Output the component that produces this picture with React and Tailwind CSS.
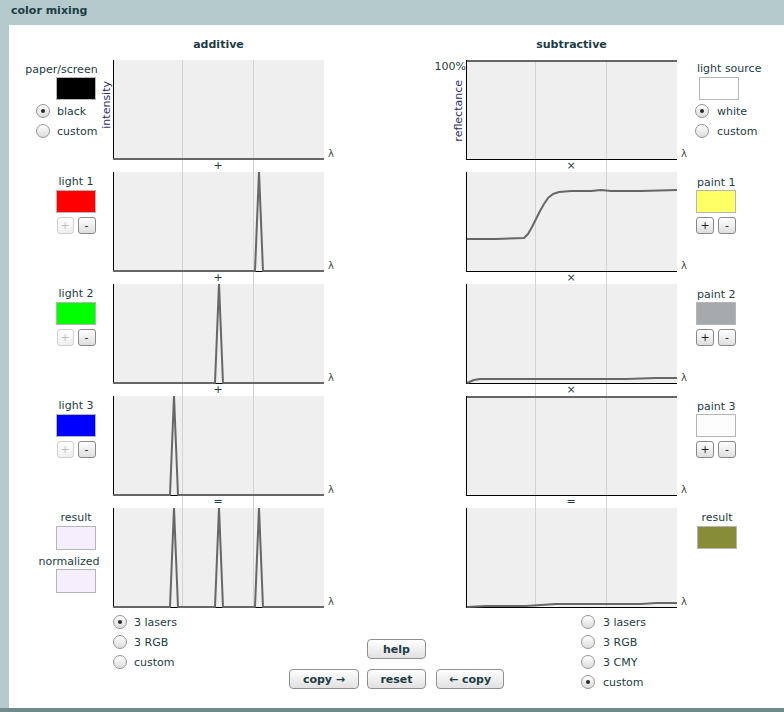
import React from "react";

const W = 211;
const H = 100;

function peaksLine(peaks) {
  const pts = ["0,99"];
  peaks.forEach((p) => {
    pts.push(`${p - 4},99`, `${p},0`, `${p + 4},99`);
  });
  pts.push(`${W},99`);
  return pts.join(" ");
}

const additive = [
  { line: peaksLine([]) },
  { line: peaksLine([146]) },
  { line: peaksLine([106]) },
  { line: peaksLine([61]) },
  { line: peaksLine([61, 106, 146]) },
];

const subtractive = [
  { line: "1,1 211,1" },
  {
    line: "1,67 30,67 58,66 62,62 66,55 70,47 74,39 78,32 82,26 87,22 93,20 105,19 125,19 135,18 145,19 175,19 211,18",
  },
  { line: "1,99 8,96 14,95 60,95 120,95 160,95 190,94 211,94" },
  { line: "1,1 211,1" },
  { line: "1,99 20,98 60,98 75,97 90,96 150,96 175,96 190,95 211,95" },
];

function Chart({ line }) {
  return (
    <svg width={W} height={H} viewBox={`0 0 ${W} ${H}`} className="block shrink-0">
      <rect x="1" y="0" width={W - 1} height={H} fill="#efefef" />
      <line x1="69.5" y1="0" x2="69.5" y2={H} stroke="#d3d3d3" />
      <line x1="140.5" y1="0" x2="140.5" y2={H} stroke="#d3d3d3" />
      <line x1="0" y1="99.5" x2={W} y2="99.5" stroke="#000" />
      <line x1="0.5" y1="0" x2="0.5" y2={H} stroke="#000" />
      <polyline points={line} fill="none" stroke="#676767" strokeWidth="2" strokeLinejoin="round" />
    </svg>
  );
}

function Gap({ op }) {
  return (
    <div className="flex h-3 w-[211px]">
      <div className="w-[69px]" />
      <div className="w-px bg-[#d3d3d3]" />
      <div className="w-[70px] text-center text-[11px] leading-[12px]">{op}</div>
      <div className="w-px bg-[#d3d3d3]" />
    </div>
  );
}

function ChartColumn({ charts, ops, title, width }) {
  return (
    <div className={width}>
      <div className="h-[35px] w-[211px] pt-[13px] text-center font-bold leading-[13px]">{title}</div>
      {charts.map((c, i) => (
        <div key={i}>
          <div className="flex h-[100px] items-end">
            <Chart line={c.line} />
            <span className="mb-[1px] ml-[4px] text-[10px] leading-none text-[#444]">λ</span>
          </div>
          {i < 4 && <Gap op={ops[i]} />}
        </div>
      ))}
    </div>
  );
}

function Radio({ checked, label, gap = "gap-[7px]" }) {
  return (
    <div className={`flex h-5 items-center ${gap}`}>
      <span className="flex h-[14px] w-[14px] items-center justify-center rounded-full border border-[#959595] bg-linear-to-b from-white to-[#dcdcdc]">
        {checked && <span className="h-[4px] w-[4px] rounded-full bg-[#2a2a2a]" />}
      </span>
      <span className="leading-[13px]">{label}</span>
    </div>
  );
}

function SmallBtn({ children, disabled }) {
  return (
    <button
      className={
        disabled
          ? "flex h-[17px] w-[17px] items-center justify-center rounded-[3px] border border-[#d0d0d0] bg-linear-to-b from-white to-[#efefef] text-[11px] leading-none text-[#c2c2c2]"
          : "flex h-[17px] w-[18px] items-center justify-center rounded-[3px] border border-[#8a8a8a] bg-linear-to-b from-white to-[#dedede] text-[11px] leading-none text-[#222]"
      }
    >
      {children}
    </button>
  );
}

function Btn({ children, className }) {
  return (
    <button
      className={`h-[20px] rounded-[4px] border border-[#8f8f8f] bg-linear-to-b from-white to-[#e1e1e1] text-[11px] font-bold leading-none text-[#1d3c44] ${className}`}
    >
      {children}
    </button>
  );
}

function Swatch({ color, className = "" }) {
  return <div className={`h-[23px] w-[40px] border border-[#b5b5b5] ${className}`} style={{ background: color }} />;
}

function LightRow({ label, color }) {
  return (
    <div className="h-[112px] pt-[3px]">
      <div className="ml-[47px] flex w-[40px] flex-col items-center">
        <div className="whitespace-nowrap leading-[13px]">{label}</div>
        <Swatch color={color} className="mt-[2px]" />
        <div className="mt-[4px] flex gap-[4px]">
          <SmallBtn disabled>+</SmallBtn>
          <SmallBtn>-</SmallBtn>
        </div>
      </div>
    </div>
  );
}

function PaintRow({ label, color }) {
  return (
    <div className="h-[112px] pt-[4px]">
      <div className="ml-[2px] leading-[13px]">{label}</div>
      <Swatch color={color} className="ml-[1px] mt-[1px]" />
      <div className="ml-[1px] mt-[4px] flex gap-[4px]">
        <SmallBtn>+</SmallBtn>
        <SmallBtn>-</SmallBtn>
      </div>
    </div>
  );
}

export default function App() {
  return (
    <div className="h-[712px] w-[784px] bg-[#b5cacd] font-['DejaVu_Sans',sans-serif] text-[11px] text-[#1d3c44]">
      <div className="h-[25px] pl-[11px] pt-[4px] font-bold leading-[13px]">color mixing</div>
      <div className="ml-[9px] h-[683px] bg-white">
        <div className="flex h-[583px]">
          {/* additive controls */}
          <div className="w-[90px] pt-[35px]">
            <div className="h-[112px] pt-[3px]">
              <div className="ml-[47px] flex w-[40px] flex-col items-center">
                <div className="mr-[29px] whitespace-nowrap leading-[13px]">paper/screen</div>
                <Swatch color="#000" className="mt-px" />
              </div>
              <div className="ml-[27px] mt-px">
                <Radio checked label="black" />
                <Radio label="custom" />
              </div>
            </div>
            <LightRow label="light 1" color="#ff0000" />
            <LightRow label="light 2" color="#00ff00" />
            <LightRow label="light 3" color="#0000ff" />
            <div className="pt-[3px]">
              <div className="ml-[47px] flex w-[40px] flex-col items-center">
                <div className="whitespace-nowrap leading-[13px]">result</div>
                <Swatch color="#f5effd" className="mt-[2px] h-[24px]" />
                <div className="mr-[14px] mt-[5px] whitespace-nowrap leading-[13px]">normalized</div>
                <Swatch color="#f5effd" className="mt-px h-[24px]" />
              </div>
            </div>
          </div>
          <div className="flex w-[14px] flex-col items-end pt-[56px]">
            <span className="rotate-180 leading-[12px] text-[#2c2c6c] [writing-mode:vertical-rl]">intensity</span>
          </div>
          <ChartColumn charts={additive} ops={["+", "+", "+", "="]} title="additive" width="w-[231px]" />
          <div className="w-[90px]" />

          {/* subtractive */}
          <div className="flex w-[32px] flex-col items-end pt-[35px]">
            <div className="leading-[13px]">100%</div>
            <span className="mt-[7px] mr-px rotate-180 leading-[12px] text-[#2c2c6c] [writing-mode:vertical-rl]">reflectance</span>
          </div>
          <ChartColumn charts={subtractive} ops={["×", "×", "×", "="]} title="subtractive" width="w-[229px]" />

          {/* subtractive controls */}
          <div className="flex-1 pt-[35px]">
            <div className="h-[112px] pt-[2px]">
              <div className="ml-[2px] leading-[13px]">light source</div>
              <Swatch color="#fff" className="ml-[4px] mt-[2px]" />
              <div className="mt-px">
                <Radio checked label="white" gap="gap-[8px]" />
                <Radio label="custom" gap="gap-[8px]" />
              </div>
            </div>
            <PaintRow label="paint 1" color="#ffff66" />
            <PaintRow label="paint 2" color="#a3a9ad" />
            <PaintRow label="paint 3" color="#fdfdfd" />
            <div className="pt-[3px]">
              <div className="ml-[2px] flex w-[40px] flex-col items-center">
                <div className="whitespace-nowrap leading-[13px]">result</div>
                <Swatch color="#878c38" className="mt-[2px]" />
              </div>
            </div>
          </div>
        </div>

        {/* bottom controls */}
        <div className="flex">
          <div className="ml-[104px] w-[100px] pt-[4px]">
            <Radio checked label="3 lasers" />
            <Radio label="3 RGB" />
            <Radio label="custom" />
          </div>
          <div className="ml-[76px] flex w-[215px] flex-col items-center pt-[31px]">
            <Btn className="w-[59px]">help</Btn>
            <div className="mt-[10px] flex">
              <Btn className="w-[70px]">copy →</Btn>
              <Btn className="ml-[8px] w-[59px]">reset</Btn>
              <Btn className="ml-[10px] w-[68px]">← copy</Btn>
            </div>
          </div>
          <div className="ml-[77px] pt-[4px]">
            <Radio label="3 lasers" gap="gap-[8px]" />
            <Radio label="3 RGB" gap="gap-[8px]" />
            <Radio label="3 CMY" gap="gap-[8px]" />
            <Radio checked label="custom" gap="gap-[8px]" />
          </div>
        </div>
      </div>
      <div className="h-[4px] bg-[#6f8b8c]" />
    </div>
  );
}
